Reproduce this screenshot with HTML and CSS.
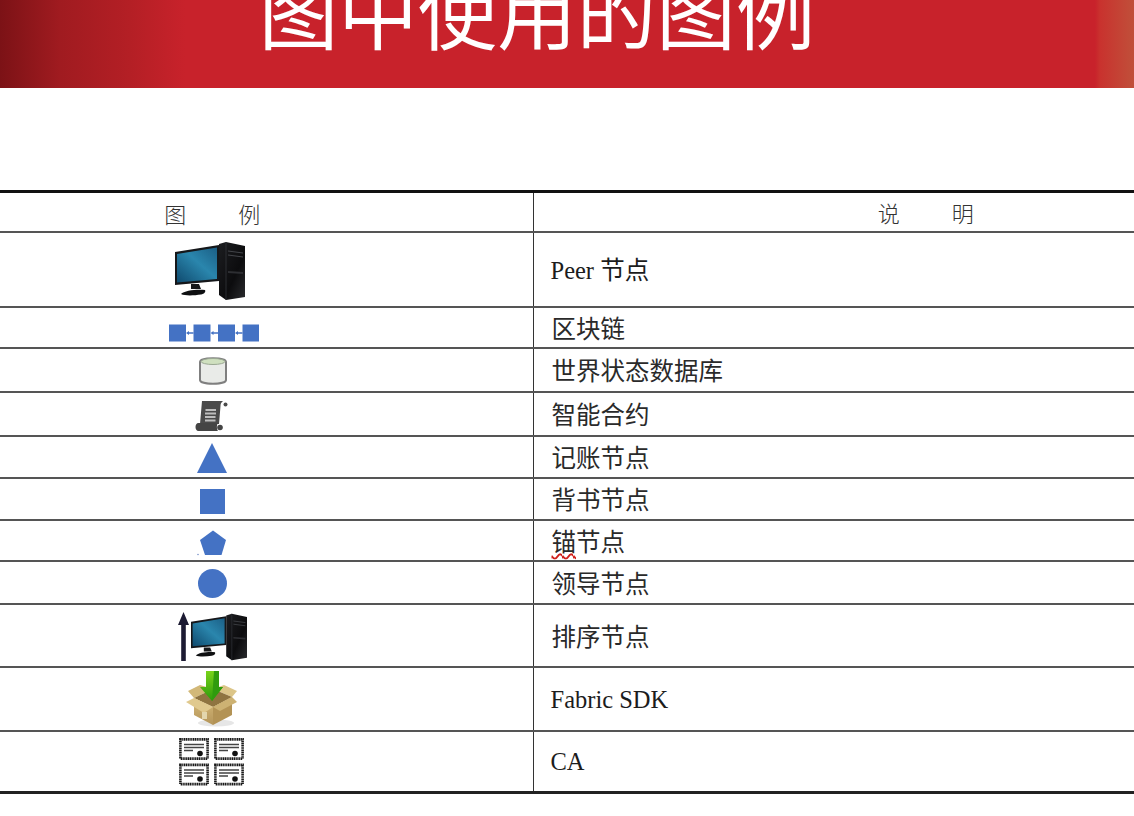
FILE: index.html
```html
<!DOCTYPE html>
<html lang="zh-CN">
<head>
<meta charset="utf-8">
<title>图中使用的图例</title>
<link rel="stylesheet" href="styles.css">
</head>
<body>
<svg class="defs" width="0" height="0" aria-hidden="true">
  <defs>
    <linearGradient id="screen" x1="0" y1="1" x2="1" y2="0">
      <stop offset="0" stop-color="#0f4a6e"/>
      <stop offset="0.55" stop-color="#2a86ad"/>
      <stop offset="1" stop-color="#1b5f86"/>
    </linearGradient>
    <linearGradient id="tower" x1="0" y1="0" x2="1" y2="1">
      <stop offset="0" stop-color="#1c1d20"/>
      <stop offset="0.6" stop-color="#0c0c0e"/>
      <stop offset="1" stop-color="#2a2b2e"/>
    </linearGradient>
    <linearGradient id="carton" x1="0" y1="0" x2="0" y2="1">
      <stop offset="0" stop-color="#d6b978"/>
      <stop offset="1" stop-color="#b4955a"/>
    </linearGradient>
    <linearGradient id="green" x1="0" y1="0" x2="0" y2="1">
      <stop offset="0" stop-color="#79d31a"/>
      <stop offset="1" stop-color="#2c9a0c"/>
    </linearGradient>
    <symbol id="pc" viewBox="0 0 72 60">
      <path d="M1 11 45 4V40L1 44Z" fill="#15171a"/>
      <path d="M3 13 43 6.500V38L3 41.500Z" fill="url(#screen)"/>
      <path d="M17 43h8l2 5H17Z" fill="#17181a"/>
      <path d="M7 53c3-4 18-5 24-4 1 2-1 4-4 4.500-7 1-16 1.500-20-.5Z" fill="#0e0f11"/>
      <path d="M45 3 52 1 71 5V56L52 59 45 54Z" fill="url(#tower)"/>
      <path d="M52 1V59" stroke="#33353a" stroke-width=".8"/>
      <path d="M54 10 69 12M54 14 69 16" stroke="#43454a" stroke-width="1"/>
      <path d="M54 30 69 31V33L54 32Z" fill="#2d2e32"/>
    </symbol>
    <symbol id="cert" viewBox="0 0 30 22">
      <rect x="1.400" y="1.400" width="27.200" height="19.200" fill="#fff" stroke="#1a1a1a" stroke-width="2.600" stroke-dasharray="1.300 .5"/>
      <path d="M5 6.500H25M5 9.500H25M5 12.500H14" stroke="#444" stroke-width="1.400"/>
      <circle cx="21" cy="15.500" r="2.800" fill="#111"/>
    </symbol>
  </defs>
</svg>

<header class="banner">
  <h1 class="banner-title">图中使用的图例</h1>
</header>

<main class="sheet">
  <table class="legend">
    <thead>
      <tr>
        <th class="col-icon"><span class="spread"><span>图</span><span>例</span></span></th>
        <th class="col-text"><span class="spread"><span>说</span><span>明</span></span></th>
      </tr>
    </thead>
    <tbody>
      <tr>
        <td class="col-icon"><svg class="icon icon-pc" width="72" height="60" viewBox="0 0 72 60"><use href="#pc" width="72" height="60"/></svg></td>
        <td class="col-text col-latin">Peer 节点</td>
      </tr>
      <tr>
        <td class="col-icon">
          <svg class="icon icon-chain" width="90" height="18" viewBox="0 0 90 18">
            <g fill="#4472c4">
              <rect y=".5" width="17" height="17"/><rect x="24.500" y=".5" width="17" height="17"/><rect x="49" y=".5" width="17" height="17"/><rect x="73.500" y=".5" width="17" height="17"/>
              <path d="M17 9l3-2v1.300h4.500v1.400H20V11ZM41.500 9l3-2v1.300H49v1.400h-4.500V11ZM66 9l3-2v1.300h4.500v1.400H69V11Z"/>
            </g>
          </svg>
        </td>
        <td class="col-text">区块链</td>
      </tr>
      <tr>
        <td class="col-icon">
          <svg class="icon icon-db" width="30" height="30" viewBox="0 0 30 30">
            <path d="M2 6c0-5 26-5 26 0V24c0 5-26 5-26 0Z" fill="#e9ebe8" stroke="#7f7f7f" stroke-width="2"/>
            <ellipse cx="15" cy="5.500" rx="12" ry="3" fill="#cfe0bf" stroke="#9aa892" stroke-width="1"/>
          </svg>
        </td>
        <td class="col-text">世界状态数据库</td>
      </tr>
      <tr>
        <td class="col-icon">
          <svg class="icon" width="34" height="33" viewBox="0 0 34 33">
            <path d="M7 2H28C26 3.500 25.500 5 25.500 7L24 25H5Z" fill="#4a4a4a"/>
            <circle cx="30.500" cy="5.500" r="2" fill="#4a4a4a"/>
            <path d="M10.500 11H21M10 14.500H21M10 18H20.500M10 21.500H20.500" stroke="#bdbdbd" stroke-width="2"/>
            <path d="M3.500 24H23C21.500 26 21.500 30 23 32H3.500C-.5 32-.5 24 3.500 24Z" fill="#444"/>
            <circle cx="25" cy="28.500" r="2.800" fill="#444"/>
          </svg>
        </td>
        <td class="col-text">智能合约</td>
      </tr>
      <tr>
        <td class="col-icon"><svg class="icon" width="30" height="30" viewBox="0 0 30 30"><path d="M15 0 30 30H0Z" fill="#4472c4"/></svg></td>
        <td class="col-text">记账节点</td>
      </tr>
      <tr>
        <td class="col-icon"><svg class="icon icon-square" width="25" height="25" viewBox="0 0 25 25"><rect width="25" height="25" fill="#4472c4"/></svg></td>
        <td class="col-text">背书节点</td>
      </tr>
      <tr>
        <td class="col-icon">
          <svg class="icon icon-penta" width="30" height="26" viewBox="0 0 30 26">
            <path d="M16 .5 29 10 24.500 25H8L3 10Z" fill="#4472c4"/>
            <circle cx="1" cy="24.500" r=".8" fill="#7b93c9"/>
          </svg>
        </td>
        <td class="col-text"><span class="misspelt">锚</span>节点</td>
      </tr>
      <tr>
        <td class="col-icon"><svg class="icon" width="29" height="29" viewBox="0 0 29 29"><circle cx="14.500" cy="14.500" r="14.500" fill="#4472c4"/></svg></td>
        <td class="col-text">领导节点</td>
      </tr>
      <tr>
        <td class="col-icon">
          <svg class="icon icon-order" width="70" height="50" viewBox="0 0 70 50">
            <path d="M5.500 0 11 13H7.800V49H3.200V13H0Z" fill="#1c1b33"/>
            <use href="#pc" x="12" y="1" width="58" height="48"/>
          </svg>
        </td>
        <td class="col-text">排序节点</td>
      </tr>
      <tr>
        <td class="col-icon">
          <svg class="icon icon-box" width="52" height="56" viewBox="0 0 52 56">
            <ellipse cx="30" cy="52" rx="18" ry="3.500" fill="#e6e6e6"/>
            <path d="M8 27 27 18 14 14 2 20Z" fill="#d2b878"/>
            <path d="M46 26 27 18 38 14 51 20Z" fill="#dcc588"/>
            <path d="M8 27 27 18 46 26 27 36Z" fill="#8f7440"/>
            <path d="M20 0H33V16H37L26 30 14 16H20Z" fill="url(#green)"/>
            <path d="M28 0H33V16H37L26 30Z" fill="#2f9b0e"/>
            <path d="M8 27 27 36V54L8 44Z" fill="url(#carton)"/>
            <path d="M27 36 46 26V44L27 54Z" fill="#b39355"/>
            <path d="M8 27 27 36 18 42 0 31Z" fill="#e0c98e"/>
            <path d="M46 26 27 36 34 40 51 31Z" fill="#cdb273"/>
            <rect x="16" y="41" width="5" height="7" fill="#e3d6ad"/>
          </svg>
        </td>
        <td class="col-text col-latin">Fabric SDK</td>
      </tr>
      <tr>
        <td class="col-icon">
          <svg class="icon" width="66" height="50" viewBox="0 0 66 50">
            <use href="#cert" x="0" y="1" width="30" height="22"/>
            <use href="#cert" x="35" y="1" width="30" height="22"/>
            <use href="#cert" x="0" y="26" width="30" height="23"/>
            <use href="#cert" x="35" y="26" width="30" height="23"/>
          </svg>
        </td>
        <td class="col-text col-latin">CA</td>
      </tr>
    </tbody>
  </table>
</main>
</body>
</html>
```
FILE: styles.css
```css
html, body {
  margin: 0;
  padding: 0;
  background: #fff;
  overflow: hidden;
}

body {
  width: 1134px;
  height: 816px;
  font-family: "Liberation Serif", "Noto Sans CJK SC", serif;
  color: #222;
}

.defs {
  display: block;
  height: 0;
}

.banner {
  height: 88px;
  overflow: hidden;
  display: flex;
  justify-content: center;
  background: linear-gradient(90deg,
    #7c1216 0,
    #a01b20 60px,
    #b41f25 130px,
    #c8222b 185px,
    #c8222b 1095px,
    #c9322e 1100px,
    #c0503a 1134px);
}

.banner-title {
  margin: -49px 0 0 -60px;
  font-family: "Noto Sans CJK SC", sans-serif;
  font-size: 79.500px;
  font-weight: 400;
  line-height: 116px;
  height: 116px;
  color: #fff;
  white-space: nowrap;
}

.sheet {
  padding-top: 102px;
}

.legend {
  width: 1134px;
  table-layout: fixed;
  border-collapse: collapse;
  border-top: 3px solid #111;
  border-bottom: 3px solid #222;
}

.legend th,
.legend td {
  padding: 0;
  border-top: 2px solid #555;
  font-weight: 400;
  vertical-align: middle;
}

.legend thead th {
  border-top: 0;
  height: 38px;
  font-size: 22px;
  line-height: 28px;
  font-family: "Noto Sans CJK SC", sans-serif;
  font-weight: 300;
  color: #333;
}

.col-icon {
  width: 533px;
  box-sizing: border-box;
  padding: 2px 108px 0 0 !important;
  border-right: 1px solid #333;
  text-align: center;
}

.col-text {
  padding-left: 18px !important;
  font-size: 24.500px;
  line-height: 30px;
  text-align: left;
  font-family: "Noto Sans CJK SC", sans-serif;
  font-weight: 300;
  color: #2a2a2a;
}

.col-latin {
  padding-left: 17px !important;
  padding-top: 2px !important;
  font-family: "Liberation Serif", "Noto Sans CJK SC", serif;
  font-weight: 400;
  color: #1c1c1c;
}

.spread {
  display: flex;
  gap: 52px;
  justify-content: center;
}

.legend thead .col-text {
  padding-left: 184px !important;
  font-size: 22px;
}

.icon {
  display: block;
  margin: 0 auto;
  filter: blur(0.5px);
}

.icon-pc { transform: translateX(-2px); }
.icon-chain { transform: translate(2px, 4px); }
.icon-db { transform: translateX(1px); }
.icon-square { transform: translateY(1px); }
.icon-penta { transform: translateY(1px); }
.icon-order { transform: translateX(1px); }
.icon-box { transform: translateY(-1px); }

.misspelt {
  text-decoration: underline wavy #d0201c 1.500px;
  text-underline-offset: 2px;
}

.legend tbody tr:nth-child(1) { height: 75px; }
.legend tbody tr:nth-child(2) { height: 41px; }
.legend tbody tr:nth-child(3) { height: 44px; }
.legend tbody tr:nth-child(4) { height: 44px; }
.legend tbody tr:nth-child(5) { height: 42px; }
.legend tbody tr:nth-child(6) { height: 42px; }
.legend tbody tr:nth-child(7) { height: 41px; }
.legend tbody tr:nth-child(8) { height: 43px; }
.legend tbody tr:nth-child(9) { height: 63px; }
.legend tbody tr:nth-child(10) { height: 64px; }
.legend tbody tr:nth-child(11) { height: 61px; }
```
